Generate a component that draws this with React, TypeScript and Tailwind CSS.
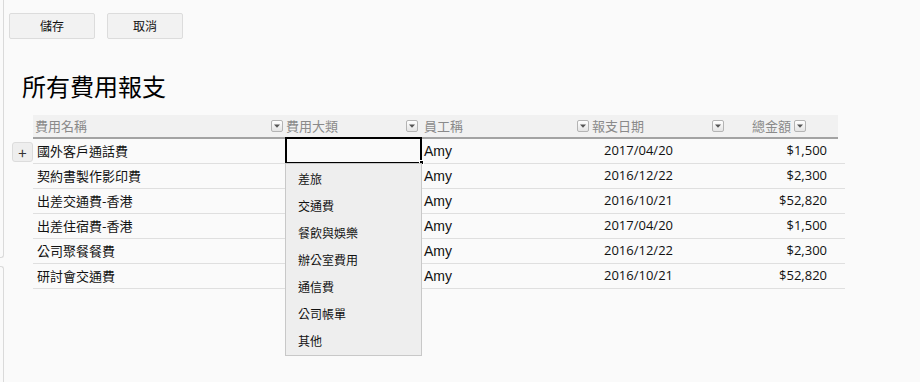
const CJK = { fontFamily: '"Noto Sans CJK TC", "Noto Sans CJK SC", sans-serif' };

interface ExpenseRow {
  name: string;
  employee: string;
  date: string;
  amount: string;
}

const ROWS: ExpenseRow[] = [
  { name: '國外客戶通話費', employee: 'Amy', date: '2017/04/20', amount: '$1,500' },
  { name: '契約書製作影印費', employee: 'Amy', date: '2016/12/22', amount: '$2,300' },
  { name: '出差交通費-香港', employee: 'Amy', date: '2016/10/21', amount: '$52,820' },
  { name: '出差住宿費-香港', employee: 'Amy', date: '2017/04/20', amount: '$1,500' },
  { name: '公司聚餐餐費', employee: 'Amy', date: '2016/12/22', amount: '$2,300' },
  { name: '研討會交通費', employee: 'Amy', date: '2016/10/21', amount: '$52,820' },
];

const CATEGORIES = ['差旅', '交通費', '餐飲與娛樂', '辦公室費用', '通信費', '公司帳單', '其他'];

function FilterIcon() {
  return (
    <span className="flex h-[12px] w-[12px] shrink-0 items-center justify-center rounded-[2px] border border-[#b4b4b4] bg-gradient-to-b from-white to-[#e4e4e4]">
      <svg width="6" height="4" viewBox="0 0 6 4">
        <path d="M0 0.5h6L3 3.8z" fill="#555" />
      </svg>
    </span>
  );
}

export default function App() {
  return (
    <div className="relative flex h-[382px] w-[920px] overflow-hidden bg-[#fafafa] text-[#111]" style={CJK}>
      {/* panel edge on the far left */}
      <div className="flex w-[4px] shrink-0 flex-col gap-[8px]">
        <div className="h-[258px] rounded-br-[3px] border-r border-b border-[#dadada]" />
        <div className="flex-1 rounded-tr-[3px] border-r border-t border-[#dadada]" />
      </div>

      <div className="flex flex-col pl-[5px] pt-[13px]">
        <div className="flex gap-[12px]">
          <button className="flex h-[26px] w-[86px] items-center justify-center rounded-[2px] border border-[#dcdcdc] bg-[#f2f2f2] text-[12px]">
            儲存
          </button>
          <button className="flex h-[26px] w-[76px] items-center justify-center rounded-[2px] border border-[#dcdcdc] bg-[#f2f2f2] text-[12px]">
            取消
          </button>
        </div>

        <h1 className="mt-[31px] pl-[13px] text-[24px] leading-[32px] text-black">所有費用報支</h1>

        <div className="ml-[3px] mt-[13px] flex flex-col">
          {/* header */}
          <div className="ml-[21px] flex h-[24px] w-[805px] items-center border-b-2 border-[#a3a3a3] bg-[#f1f1f1] text-[13px] text-[#8a8a8a]">
            <div className="flex w-[252px] items-center justify-between pl-[2px] pr-[2px]">
              <span>費用名稱</span>
              <FilterIcon />
            </div>
            <div className="flex w-[136px] items-center justify-between pl-[1px] pr-[3px]">
              <span>費用大類</span>
              <FilterIcon />
            </div>
            <div className="flex w-[170px] items-center justify-between pl-[3px] pr-[2px]">
              <span>員工稱</span>
              <FilterIcon />
            </div>
            <div className="flex w-[136px] items-center justify-between pl-[1px] pr-[3px]">
              <span>報支日期</span>
              <FilterIcon />
            </div>
            <div className="flex w-[81px] items-center justify-end gap-[3px] pr-[2px]">
              <span>總金額</span>
              <FilterIcon />
            </div>
          </div>

          {ROWS.map((row, i) => (
            <div key={i} className="flex">
              <div className="w-[21px] pt-[3px]">
                {i === 0 && (
                  <div className="flex h-[20px] w-[21px] items-center justify-center rounded-[3px] border border-[#dcdcdc] bg-[#eeeeee] text-[15px] leading-none text-[#333]">
                    +
                  </div>
                )}
              </div>
              <div className="flex h-[25px] w-[812px] items-center border-b border-[#dfdfdf] text-[13px]">
                <div className="w-[252px] pl-[4px]">{row.name}</div>
                <div className="relative h-full w-[136px]">
                  {i === 0 && (
                    <>
                      <div className="absolute -top-[2px] left-0 h-[27px] w-[137px] border-2 border-black" />
                      <div className="absolute -bottom-[2px] -right-[3px] h-[5px] w-[5px] border border-white bg-black" />
                      <div className="absolute left-0 top-[24px] z-10 flex w-[137px] flex-col border border-[#c8c8c8] bg-[#eeeeee] pt-[1px] pb-[1px] text-[12px]">
                        {CATEGORIES.map((c) => (
                          <div key={c} className="flex h-[27px] items-center pl-[12px]">
                            {c}
                          </div>
                        ))}
                      </div>
                    </>
                  )}
                </div>
                <div className="w-[170px] pl-[3px] text-[14px]" style={{ fontFamily: '"Liberation Sans", Arial, sans-serif' }}>
                  {row.employee}
                </div>
                <div className="w-[136px] pl-[13px]" style={{ fontFamily: '"Open Sans", sans-serif' }}>
                  {row.date}
                </div>
                <div className="w-[100px] text-right" style={{ fontFamily: '"Open Sans", sans-serif' }}>
                  {row.amount}
                </div>
              </div>
            </div>
          ))}
        </div>
      </div>
    </div>
  );
}
